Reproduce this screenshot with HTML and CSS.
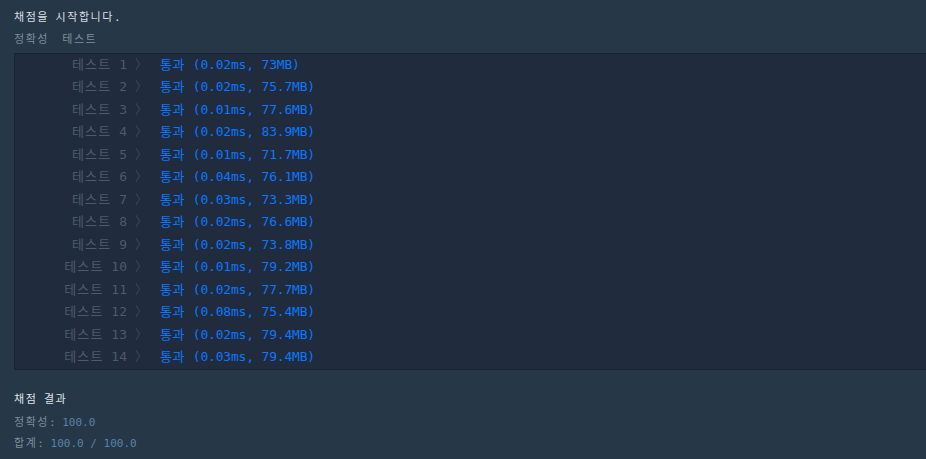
FILE: index.html
```html
<!DOCTYPE html>
<html lang="ko">
<head>
<meta charset="utf-8">
<title>채점 결과</title>
<link rel="stylesheet" href="styles.css">
</head>
<body>
<div class="console">
  <p class="line start"><span class="ko">채점을</span> <span class="ko">시작합니다</span>.</p>
  <p class="line section"><span class="ko">정확성</span>&nbsp;&nbsp;<span class="ko">테스트</span></p>
  <div class="results">
    <div class="row"><span class="title"><span class="ko">테스트</span> 1 <span class="arrow ko">〉</span></span><span class="result"><span class="ko">통과</span> (0.02ms, 73MB)</span></div>
    <div class="row"><span class="title"><span class="ko">테스트</span> 2 <span class="arrow ko">〉</span></span><span class="result"><span class="ko">통과</span> (0.02ms, 75.7MB)</span></div>
    <div class="row"><span class="title"><span class="ko">테스트</span> 3 <span class="arrow ko">〉</span></span><span class="result"><span class="ko">통과</span> (0.01ms, 77.6MB)</span></div>
    <div class="row"><span class="title"><span class="ko">테스트</span> 4 <span class="arrow ko">〉</span></span><span class="result"><span class="ko">통과</span> (0.02ms, 83.9MB)</span></div>
    <div class="row"><span class="title"><span class="ko">테스트</span> 5 <span class="arrow ko">〉</span></span><span class="result"><span class="ko">통과</span> (0.01ms, 71.7MB)</span></div>
    <div class="row"><span class="title"><span class="ko">테스트</span> 6 <span class="arrow ko">〉</span></span><span class="result"><span class="ko">통과</span> (0.04ms, 76.1MB)</span></div>
    <div class="row"><span class="title"><span class="ko">테스트</span> 7 <span class="arrow ko">〉</span></span><span class="result"><span class="ko">통과</span> (0.03ms, 73.3MB)</span></div>
    <div class="row"><span class="title"><span class="ko">테스트</span> 8 <span class="arrow ko">〉</span></span><span class="result"><span class="ko">통과</span> (0.02ms, 76.6MB)</span></div>
    <div class="row"><span class="title"><span class="ko">테스트</span> 9 <span class="arrow ko">〉</span></span><span class="result"><span class="ko">통과</span> (0.02ms, 73.8MB)</span></div>
    <div class="row"><span class="title"><span class="ko">테스트</span> 10 <span class="arrow ko">〉</span></span><span class="result"><span class="ko">통과</span> (0.01ms, 79.2MB)</span></div>
    <div class="row"><span class="title"><span class="ko">테스트</span> 11 <span class="arrow ko">〉</span></span><span class="result"><span class="ko">통과</span> (0.02ms, 77.7MB)</span></div>
    <div class="row"><span class="title"><span class="ko">테스트</span> 12 <span class="arrow ko">〉</span></span><span class="result"><span class="ko">통과</span> (0.08ms, 75.4MB)</span></div>
    <div class="row"><span class="title"><span class="ko">테스트</span> 13 <span class="arrow ko">〉</span></span><span class="result"><span class="ko">통과</span> (0.02ms, 79.4MB)</span></div>
    <div class="row"><span class="title"><span class="ko">테스트</span> 14 <span class="arrow ko">〉</span></span><span class="result"><span class="ko">통과</span> (0.03ms, 79.4MB)</span></div>
  </div>
  <div class="summary">
    <p class="line heading"><span class="ko">채점</span> <span class="ko">결과</span></p>
    <p class="line score"><span class="label"><span class="ko">정확성</span>:</span> <span class="value">100.0</span></p>
    <p class="line score"><span class="label"><span class="ko">합계</span>:</span> <span class="value">100.0 / 100.0</span></p>
  </div>
</div>
</body>
</html>
```

FILE: styles.css
```css
html, body {
  margin: 0;
  padding: 0;
  background: #263747;
  height: 100%;
}

body {
  font-family: "DejaVu Sans Mono", "Noto Sans CJK KR", monospace;
  font-size: 11px;
  color: #d9dfe5;
  overflow: hidden;
}

.ko {
  letter-spacing: 0.14em;
}

.console {
  padding: 10px 0 0 14px;
}

.line {
  margin: 0;
  line-height: 16px;
  white-space: pre;
}

.start {
  color: #d9dfe5;
}

.section {
  margin-top: 6px;
  color: #7d8e9e;
}

.results {
  margin-top: 5px;
  background: #202b3d;
  border: 1px solid #172334;
  border-right: 0;
  font-size: 13px;
}

.results .ko {
  letter-spacing: 0.09em;
}

.row {
  display: flex;
  align-items: center;
  box-sizing: border-box;
  height: 22.5px;
  padding-bottom: 4px;
}

.title {
  width: 134px;
  flex: none;
  text-align: right;
  color: #4b5b6c;
  white-space: pre;
}

.arrow {
  color: #394859;
}

.result {
  padding-left: 11px;
  color: #0a78ff;
  white-space: pre;
  letter-spacing: -0.2px;
}

.results .result .ko {
  letter-spacing: 0.05em;
}

.summary {
  padding-top: 22px;
}

.heading {
  color: #dfe3e8;
}

.score {
  line-height: 21px;
  color: #7d8e9e;
}

.heading + .score {
  margin-top: 4px;
}

.value {
  color: #5a82ad;
}
```
